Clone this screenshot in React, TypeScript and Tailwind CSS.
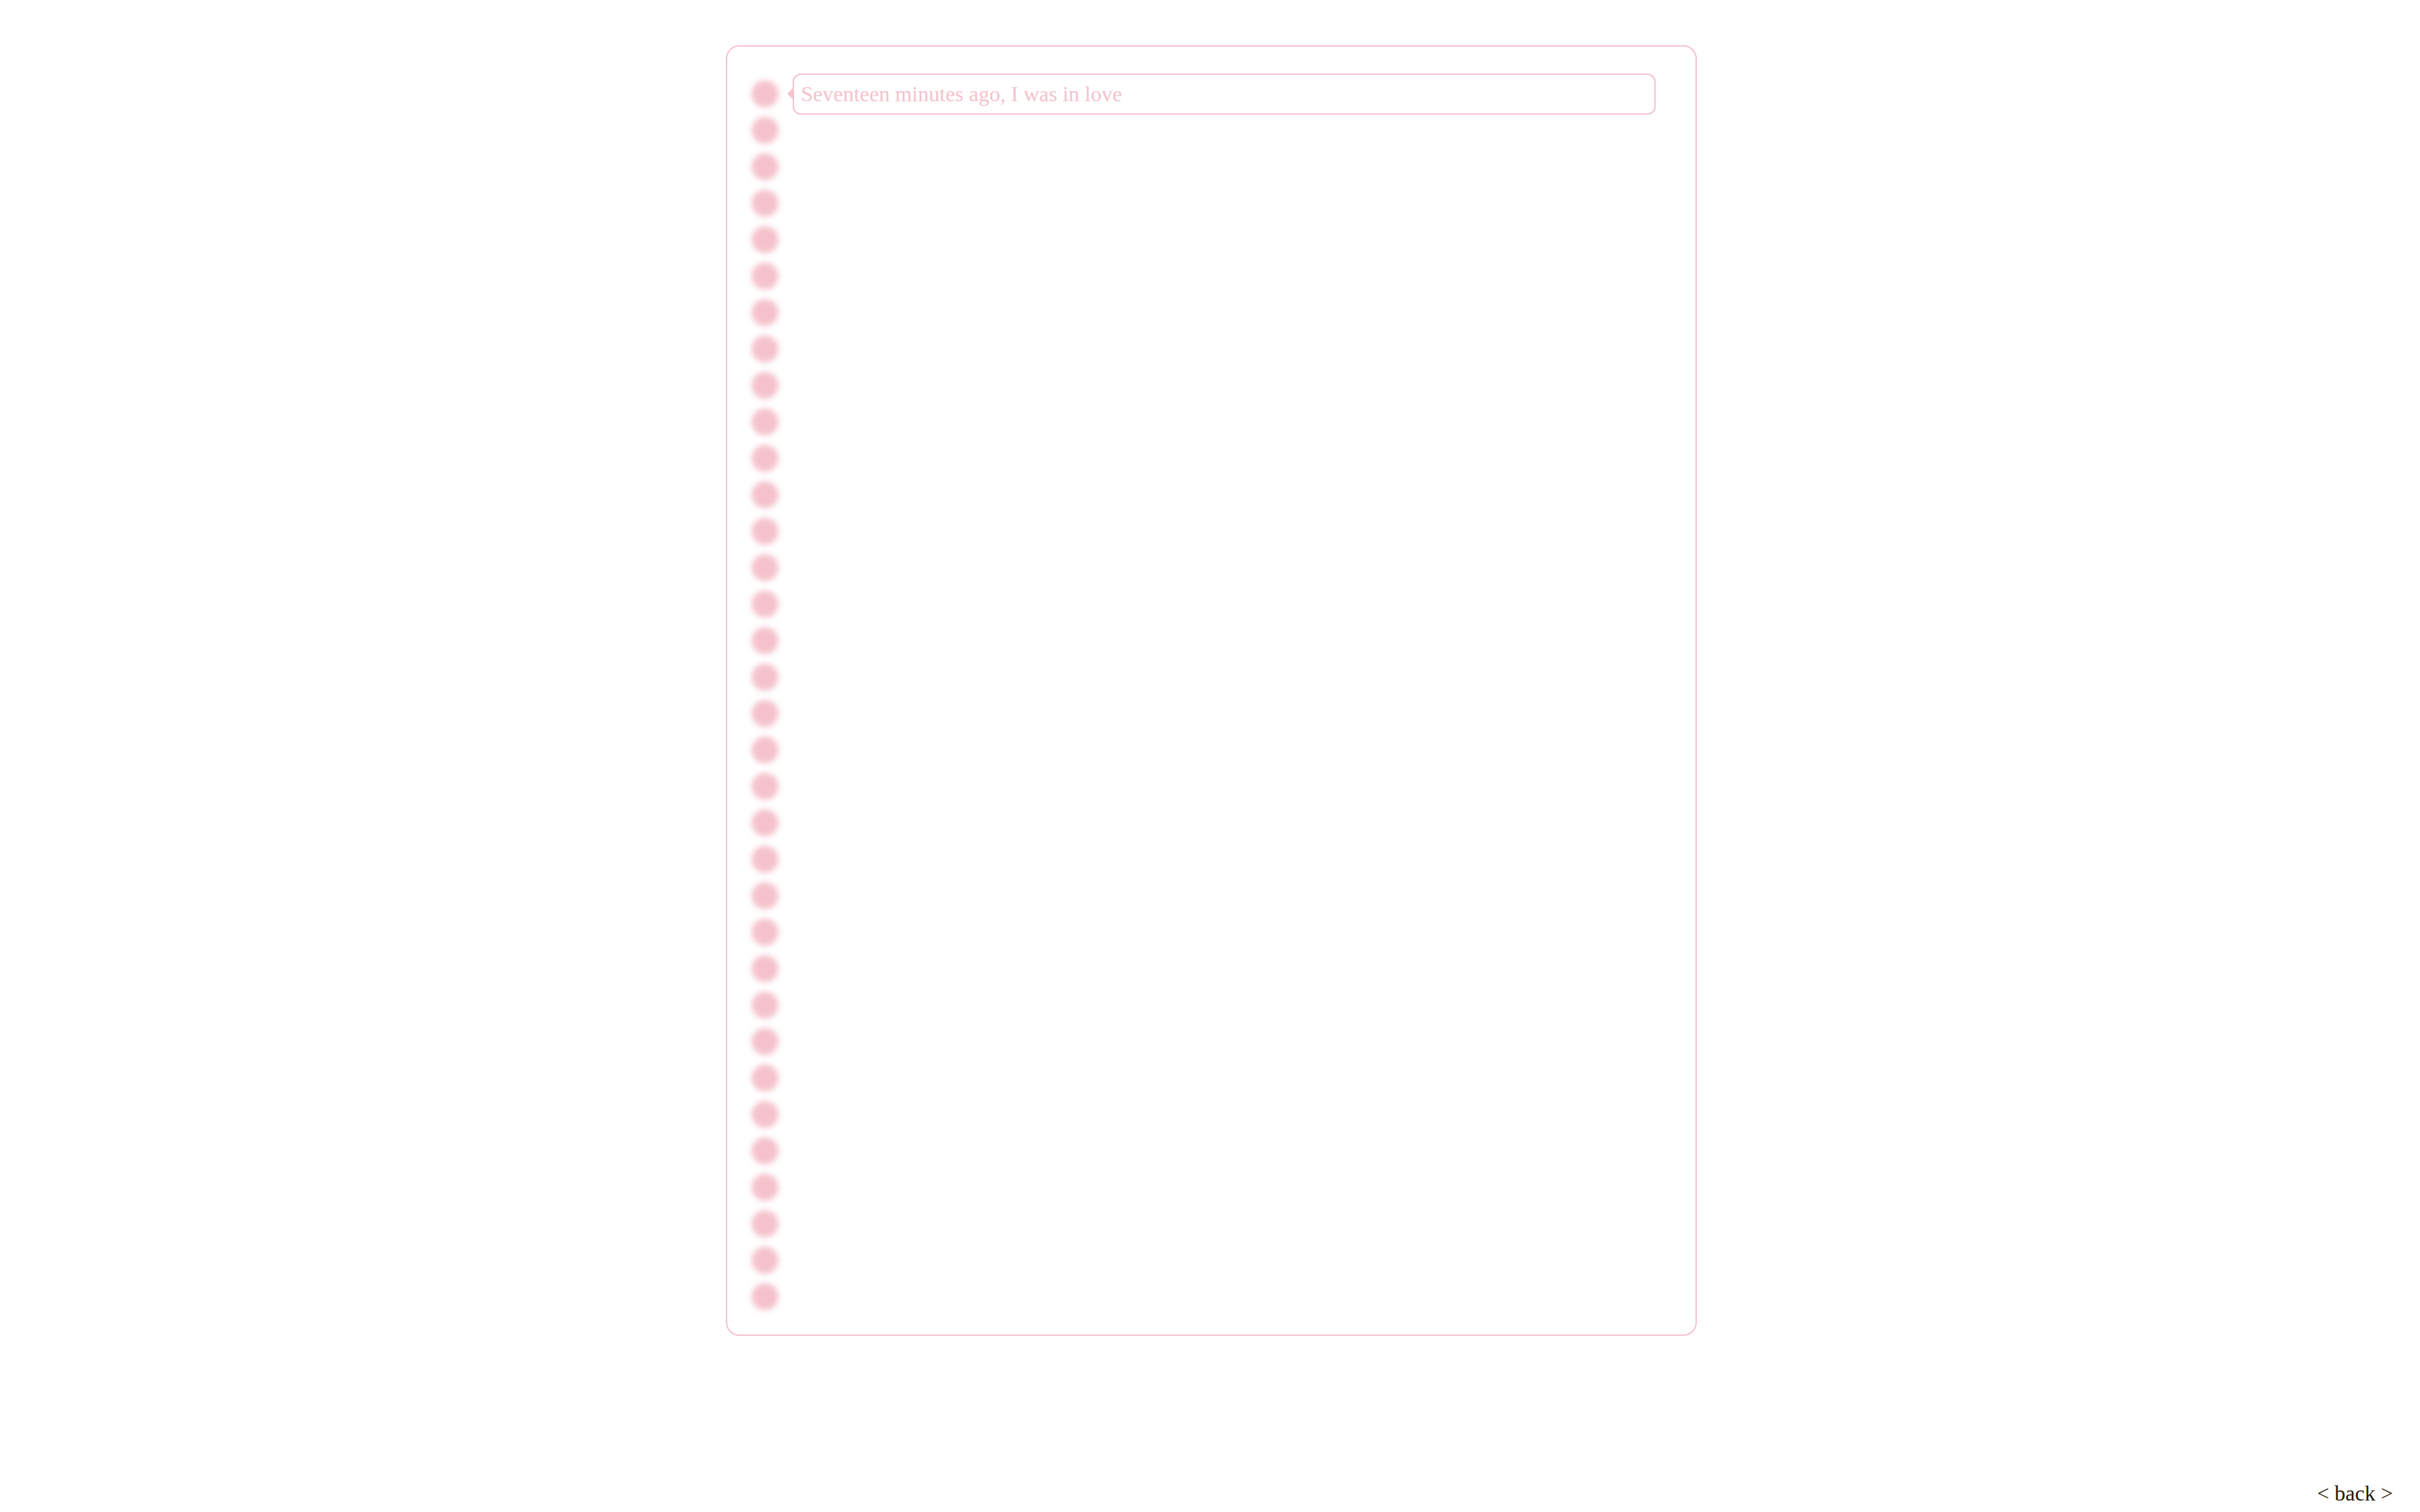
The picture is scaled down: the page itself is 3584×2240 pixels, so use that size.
const lines = ["Seventeen minutes ago, I was in love"];
const DOT_COUNT = 34;

export default function App() {
  return (
    <div className="flex min-h-screen flex-col bg-white font-['Liberation_Serif',serif] text-[32px] leading-[37px]">
      <main className="mt-[67px] ml-[30%] box-content w-2/5 rounded-[20px] border-2 border-[#f5c2cc]">
        <ul className="flex flex-col gap-[14px] px-9 pt-[50px] pb-9">
          {Array.from({ length: DOT_COUNT }, (_, i) => (
            <li key={i} className="flex h-10 items-center">
              <button
                type="button"
                aria-label={`Line ${i + 1}`}
                className="size-10 shrink-0 rounded-full bg-[#f5c2cc] blur-[4px]"
              />
              {lines[i] && (
                <p className="relative mr-[23px] ml-[21px] flex-1 rounded-xl border-2 border-[#f5c2cc] px-[10px] py-[10px] text-[#f5c2cc]">
                  <span className="absolute top-1/2 -left-[10px] -translate-y-1/2 border-y-8 border-r-8 border-y-transparent border-r-[#f5c2cc]" />
                  {lines[i]}
                </p>
              )}
            </li>
          ))}
        </ul>
      </main>
      <footer className="mt-auto flex justify-end px-10 pb-[9px]">
        <a href="#back" className="text-[#2b1400]">
          &lt; back &gt;
        </a>
      </footer>
    </div>
  );
}
